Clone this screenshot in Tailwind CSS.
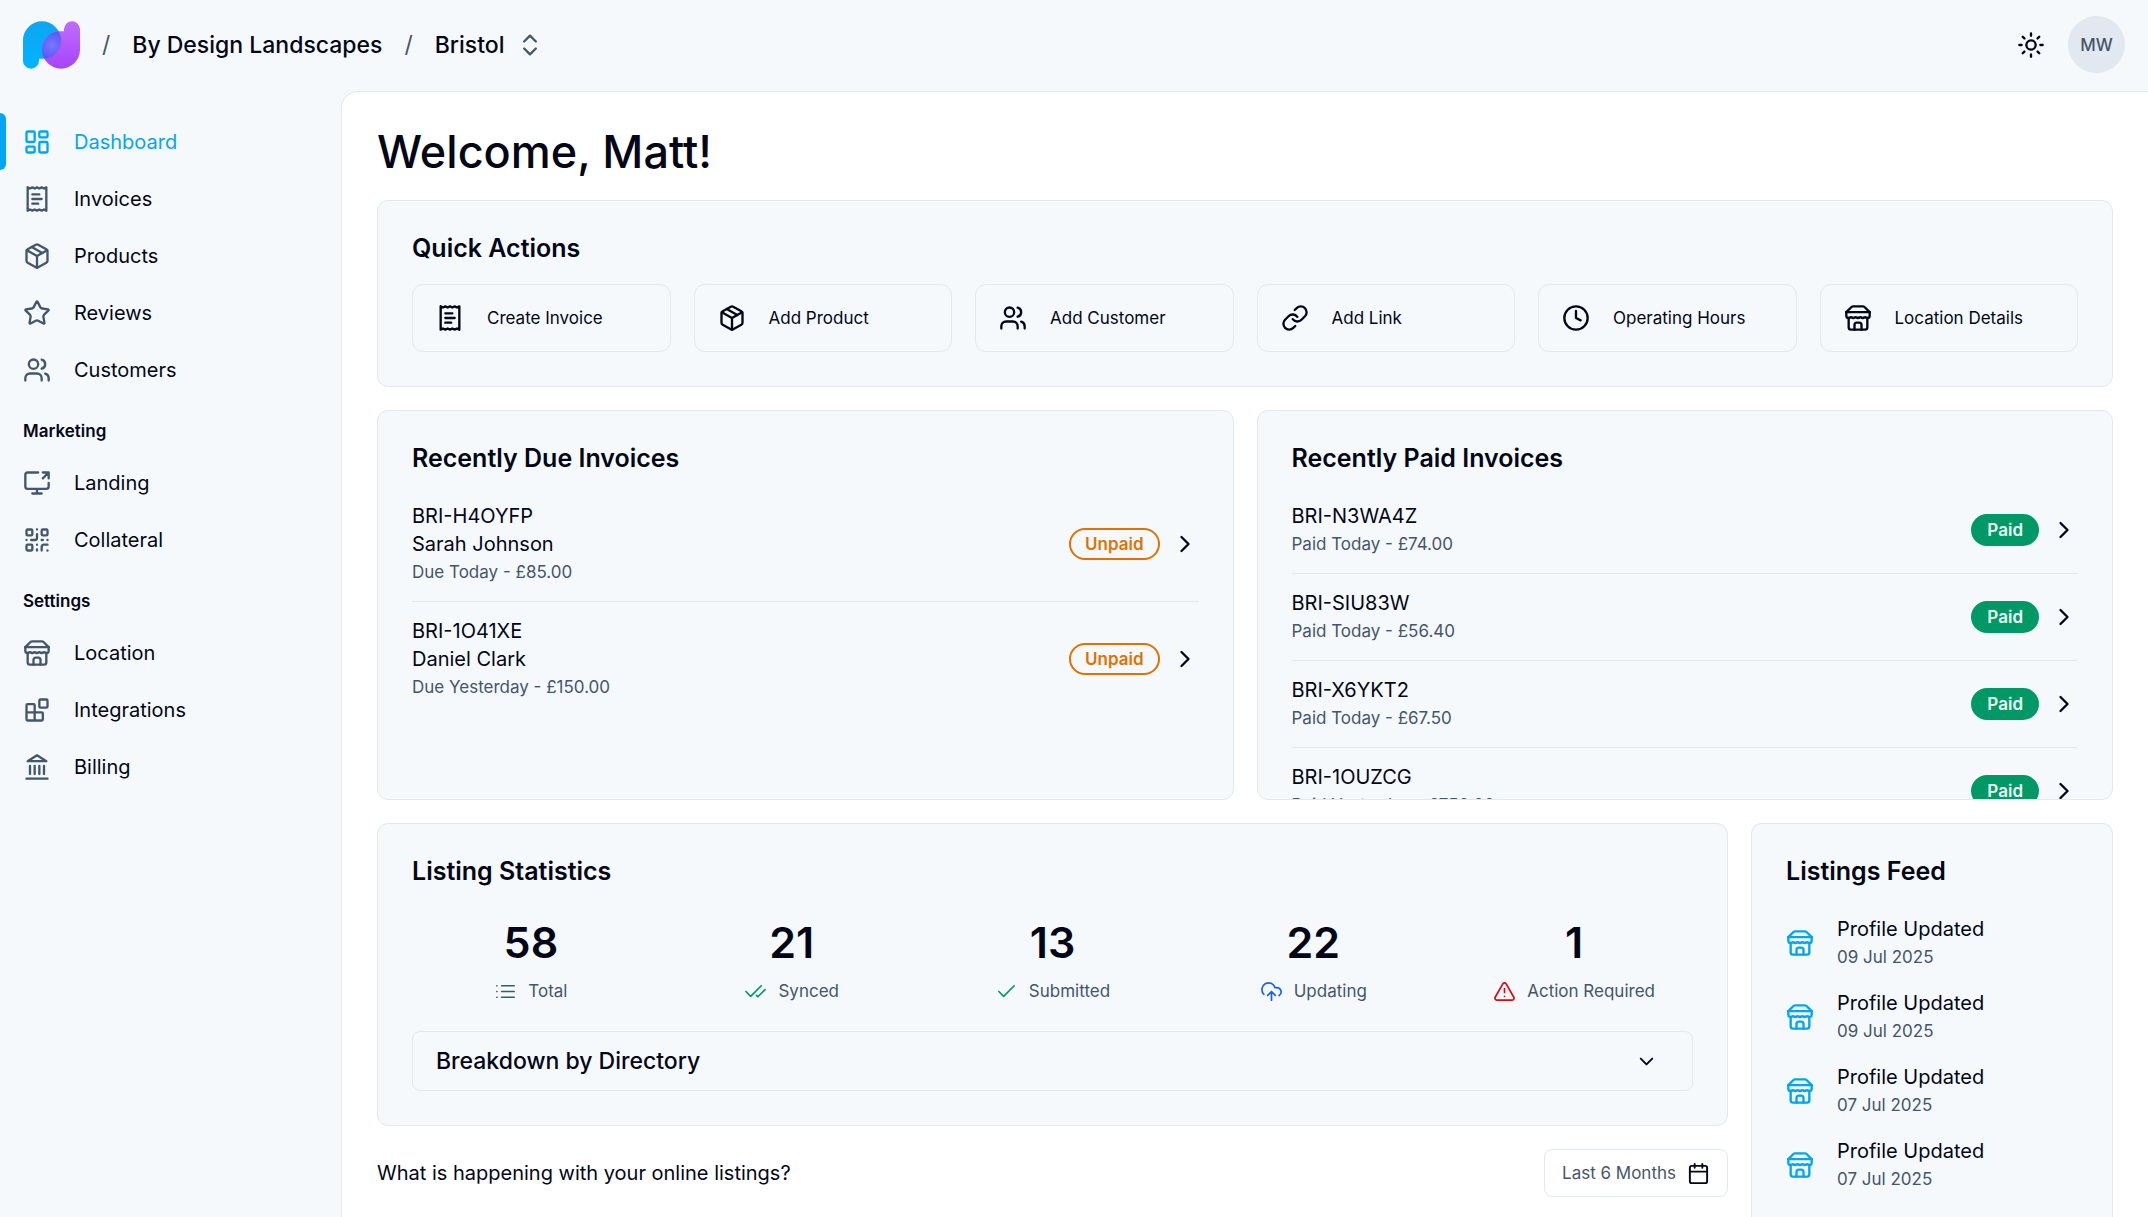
<!DOCTYPE html>
<html lang="en">
<head>
<meta charset="utf-8">
<meta name="viewport" content="width=device-width, initial-scale=1">
<title>Dashboard</title>
<script src="https://cdn.jsdelivr.net/npm/@tailwindcss/browser@4"></script>
</head>
<body class="flex h-screen flex-col overflow-hidden bg-[#f5f9fc] font-['Inter',sans-serif] text-[20px] leading-[28px] text-[#020617]">
<svg class="hidden" aria-hidden="true">
  <symbol id="dashboard" viewBox="0 0 24 24"><rect x="3" y="3" width="7" height="9" rx="1"/><rect x="14" y="3" width="7" height="5" rx="1"/><rect x="14" y="12" width="7" height="9" rx="1"/><rect x="3" y="16" width="7" height="5" rx="1"/></symbol>
  <symbol id="receipt" viewBox="0 0 24 24"><path d="M4 2v20l2-1 2 1 2-1 2 1 2-1 2 1 2-1 2 1V2l-2 1-2-1-2 1-2-1-2 1-2-1-2 1Z"/><path d="M14 8H8M16 12H8M13 16H8"/></symbol>
  <symbol id="package" viewBox="0 0 24 24"><path d="m7.5 4.27 9 5.15"/><path d="M21 8a2 2 0 0 0-1-1.73l-7-4a2 2 0 0 0-2 0l-7 4A2 2 0 0 0 3 8v8a2 2 0 0 0 1 1.73l7 4a2 2 0 0 0 2 0l7-4A2 2 0 0 0 21 16Z"/><path d="m3.3 7 8.7 5 8.7-5M12 22V12"/></symbol>
  <symbol id="star" viewBox="0 0 24 24"><path d="M11.525 2.295a.53.53 0 0 1 .95 0l2.31 4.679a2.123 2.123 0 0 0 1.595 1.16l5.166.756a.53.53 0 0 1 .294.904l-3.736 3.638a2.123 2.123 0 0 0-.611 1.878l.882 5.14a.53.53 0 0 1-.771.56l-4.618-2.428a2.122 2.122 0 0 0-1.973 0L6.396 21.01a.53.53 0 0 1-.77-.56l.881-5.139a2.122 2.122 0 0 0-.611-1.879L2.16 9.795a.53.53 0 0 1 .294-.906l5.165-.755a2.122 2.122 0 0 0 1.597-1.16z"/></symbol>
  <symbol id="users" viewBox="0 0 24 24"><path d="M16 21v-2a4 4 0 0 0-4-4H6a4 4 0 0 0-4 4v2"/><circle cx="9" cy="7" r="4"/><path d="M22 21v-2a4 4 0 0 0-3-3.87M16 3.13a4 4 0 0 1 0 7.75"/></symbol>
  <symbol id="screen" viewBox="0 0 24 24"><path d="M13 3H4a2 2 0 0 0-2 2v10a2 2 0 0 0 2 2h16a2 2 0 0 0 2-2v-3M8 21h8M12 17v4M17 8l5-5M17 3h5v5"/></symbol>
  <symbol id="qr" viewBox="0 0 24 24"><rect x="3" y="3" width="5" height="5" rx="1"/><rect x="16" y="3" width="5" height="5" rx="1"/><rect x="3" y="16" width="5" height="5" rx="1"/><path d="M21 16h-3a2 2 0 0 0-2 2v3M21 21v.01M12 7v3a2 2 0 0 1-2 2H7M3 12h.01M12 3h.01M12 16v.01M16 12h1M21 12v.01M12 21v-1"/></symbol>
  <symbol id="store" viewBox="0 0 24 24"><path d="m2 7 4.41-4.41A2 2 0 0 1 7.83 2h8.34a2 2 0 0 1 1.42.59L22 7"/><path d="M4 12v8a2 2 0 0 0 2 2h12a2 2 0 0 0 2-2v-8"/><path d="M15 22v-4a2 2 0 0 0-2-2h-2a2 2 0 0 0-2 2v4"/><path d="M2 7h20"/><path d="M22 7v3a2 2 0 0 1-2 2a2.7 2.7 0 0 1-1.59-.63.7.7 0 0 0-.82 0A2.7 2.7 0 0 1 16 12a2.7 2.7 0 0 1-1.59-.63.7.7 0 0 0-.82 0A2.7 2.7 0 0 1 12 12a2.7 2.7 0 0 1-1.59-.63.7.7 0 0 0-.82 0A2.7 2.7 0 0 1 8 12a2.7 2.7 0 0 1-1.59-.63.7.7 0 0 0-.82 0A2.7 2.7 0 0 1 4 12a2 2 0 0 1-2-2V7"/></symbol>
  <symbol id="blocks" viewBox="0 0 24 24"><rect x="14" y="3" width="7" height="7" rx="1"/><path d="M10 21V8a1 1 0 0 0-1-1H4a1 1 0 0 0-1 1v12a1 1 0 0 0 1 1h12a1 1 0 0 0 1-1v-5a1 1 0 0 0-1-1H3"/></symbol>
  <symbol id="landmark" viewBox="0 0 24 24"><path d="M3 22h18M6 18v-7M10 18v-7M14 18v-7M18 18v-7M12 2l8 5H4Z"/></symbol>
  <symbol id="link" viewBox="0 0 24 24"><path d="M10 13a5 5 0 0 0 7.54.54l3-3a5 5 0 0 0-7.07-7.07l-1.72 1.71"/><path d="M14 11a5 5 0 0 0-7.54-.54l-3 3a5 5 0 0 0 7.07 7.07l1.71-1.71"/></symbol>
  <symbol id="clock" viewBox="0 0 24 24"><circle cx="12" cy="12" r="10"/><path d="M12 6v6l4 2"/></symbol>
  <symbol id="sun" viewBox="0 0 24 24"><circle cx="12" cy="12" r="4"/><path d="M12 2v2M12 20v2M4.93 4.93l1.41 1.41M17.66 17.66l1.41 1.41M2 12h2M20 12h2M6.34 17.66l-1.41 1.41M19.07 4.93l-1.41 1.41"/></symbol>
  <symbol id="updown" viewBox="0 0 24 24"><path d="m7 15 5 5 5-5M7 9l5-5 5 5"/></symbol>
  <symbol id="right" viewBox="0 0 24 24"><path d="m9 18 6-6-6-6"/></symbol>
  <symbol id="down" viewBox="0 0 24 24"><path d="m6 9 6 6 6-6"/></symbol>
  <symbol id="list" viewBox="0 0 24 24"><path d="M8 6h13M8 12h13M8 18h13M3 6h.01M3 12h.01M3 18h.01"/></symbol>
  <symbol id="checks" viewBox="0 0 24 24"><path d="M18 6 7 17l-5-5M22 10l-7.5 7.5L13 16"/></symbol>
  <symbol id="check" viewBox="0 0 24 24"><path d="M20 6 9 17l-5-5"/></symbol>
  <symbol id="cloud" viewBox="0 0 24 24"><path d="M4 14.899A7 7 0 1 1 15.71 8h1.79a4.5 4.5 0 0 1 2.5 8.242M12 12v9M16 16l-4-4-4 4"/></symbol>
  <symbol id="alert" viewBox="0 0 24 24"><path d="m21.73 18-8-14a2 2 0 0 0-3.48 0l-8 14A2 2 0 0 0 4 21h16a2 2 0 0 0 1.73-3M12 9v4M12 17h.01"/></symbol>
  <symbol id="calendar" viewBox="0 0 24 24"><path d="M8 2v4M16 2v4"/><rect x="3" y="4" width="18" height="18" rx="2"/><path d="M3 10h18"/></symbol>
</svg>

<header class="flex h-[91px] shrink-0 items-center justify-between px-[23px] pb-[2px]">
  <nav aria-label="Breadcrumb" class="flex items-center gap-[22px] text-[23px] font-medium">
    <a href="#" aria-label="Home">
      <svg class="h-[48px] w-[57px]" viewBox="0 0 57 47.3">
        <defs>
          <linearGradient id="blue" x1="0" y1="0" x2="0" y2="1"><stop stop-color="#0ea5f0"/><stop offset="1" stop-color="#00b4ff"/></linearGradient>
          <linearGradient id="violet" x1="0" y1="0" x2="0" y2="1"><stop stop-color="#a644fb"/><stop offset="1" stop-color="#bf6dfb"/></linearGradient>
          <radialGradient id="lens" gradientUnits="userSpaceOnUse" cx="29" cy="24" r="14"><stop stop-color="#7878ff"/><stop offset="1" stop-color="#5957f5"/></radialGradient>
          <path id="lobe" d="M0 19A19 19 0 0 1 38 19A18.5 18.5 0 0 1 19.5 37.5H16V39.3A8 8 0 0 1 0 39.3Z"/>
          <clipPath id="overlap"><use href="#lobe"/></clipPath>
        </defs>
        <use href="#lobe" fill="url(#blue)"/>
        <use href="#lobe" fill="url(#violet)" transform="rotate(180 28.5 23.65)"/>
        <g clip-path="url(#overlap)"><path d="M57 28.3A19 19 0 0 1 19 28.3A18.5 18.5 0 0 1 37.5 9.8H41V47H19Z" fill="url(#lens)"/></g>
      </svg>
    </a>
    <span class="font-normal text-slate-600">/</span>
    <a href="#">By Design Landscapes</a>
    <span class="font-normal text-slate-600">/</span>
    <button type="button" class="flex items-center gap-[11px]">Bristol
      <svg class="size-[28px] fill-none stroke-slate-600 stroke-2 [stroke-linecap:round] [stroke-linejoin:round]"><use href="#updown"/></svg>
    </button>
  </nav>
  <div class="flex items-center gap-[23px] [&_svg]:size-[28px] [&_svg]:fill-none [&_svg]:stroke-current [&_svg]:stroke-2 [&_svg]:[stroke-linecap:round]">
    <button type="button" aria-label="Toggle theme"><svg><use href="#sun"/></svg></button>
    <button type="button" class="size-[57px] rounded-full bg-slate-200 text-[17px] font-medium text-slate-600">MW</button>
  </div>
</header>

<div class="flex min-h-0 flex-1">
  <nav aria-label="Main" class="w-[341px] shrink-0 pt-[22px] [&_a]:flex [&_a]:h-[57px] [&_a]:items-center [&_a]:gap-[23px] [&_a]:px-[23px] [&_h2]:h-[56px] [&_h2]:px-[23px] [&_h2]:pt-[19px] [&_h2]:text-[17px] [&_h2]:font-semibold [&_svg]:size-[28px] [&_svg]:fill-none [&_svg]:stroke-slate-600 [&_svg]:stroke-2 [&_svg]:[stroke-linecap:round] [&_svg]:[stroke-linejoin:round]">
    <a href="#" aria-current="page" class="relative text-sky-500 before:absolute before:inset-y-0 before:left-0 before:w-[6px] before:rounded-r-md before:bg-[#00a6f4]"><svg class="stroke-sky-500!"><use href="#dashboard"/></svg>Dashboard</a>
    <a href="#"><svg><use href="#receipt"/></svg>Invoices</a>
    <a href="#"><svg><use href="#package"/></svg>Products</a>
    <a href="#"><svg><use href="#star"/></svg>Reviews</a>
    <a href="#"><svg><use href="#users"/></svg>Customers</a>
    <h2>Marketing</h2>
    <a href="#"><svg><use href="#screen"/></svg>Landing</a>
    <a href="#"><svg><use href="#qr"/></svg>Collateral</a>
    <h2>Settings</h2>
    <a href="#"><svg><use href="#store"/></svg>Location</a>
    <a href="#"><svg><use href="#blocks"/></svg>Integrations</a>
    <a href="#"><svg><use href="#landmark"/></svg>Billing</a>
  </nav>

  <main class="flex min-w-0 flex-1 flex-col gap-[23px] overflow-hidden rounded-tl-[17px] border-t border-l border-slate-200 bg-white px-[35px] pt-[34px] [&_h2]:text-[25px] [&_h2]:leading-[26px] [&_h2]:font-semibold [&_svg]:shrink-0 [&_svg]:fill-none [&_svg]:stroke-current [&_svg]:stroke-2 [&_svg]:[stroke-linecap:round] [&_svg]:[stroke-linejoin:round]">
    <h1 class="text-[45px] leading-[51px] font-medium">Welcome, Matt!</h1>

    <section class="shrink-0 rounded-[11px] border border-slate-200 bg-[#f5f9fc] p-[34px]">
      <h2>Quick Actions</h2>
      <div class="mt-[23px] grid grid-cols-6 gap-[23px] text-[17px] [&_a]:flex [&_a]:h-[68px] [&_a]:items-center [&_a]:gap-[23px] [&_a]:rounded-[11px] [&_a]:border [&_a]:border-slate-200 [&_a]:px-[23px] [&_svg]:size-[28px]">
        <a href="#"><svg><use href="#receipt"/></svg>Create Invoice</a>
        <a href="#"><svg><use href="#package"/></svg>Add Product</a>
        <a href="#"><svg><use href="#users"/></svg>Add Customer</a>
        <a href="#"><svg><use href="#link"/></svg>Add Link</a>
        <a href="#"><svg><use href="#clock"/></svg>Operating Hours</a>
        <a href="#"><svg><use href="#store"/></svg>Location Details</a>
      </div>
    </section>

    <div class="grid h-[390px] shrink-0 grid-cols-2 gap-[23px] [&_a]:flex [&_a]:items-center [&_a]:gap-[11px] [&_a]:py-[15px] [&_a_svg]:size-[28px] [&_div]:flex-1 [&_small]:block [&_small]:text-[17px] [&_small]:leading-[28px] [&_small]:text-slate-600 [&_ul]:mt-[16px] [&_ul]:divide-y [&_ul]:divide-slate-200">
      <section class="overflow-hidden rounded-[11px] border border-slate-200 bg-[#f5f9fc] px-[34px] pt-[34px]">
        <h2>Recently Due Invoices</h2>
        <ul>
          <li><a href="#"><div><p>BRI-H4OYFP</p><p>Sarah Johnson</p><small>Due Today - £85.00</small></div><span class="rounded-full border-2 border-amber-600 px-[14px] text-[17px] font-semibold text-amber-600">Unpaid</span><svg><use href="#right"/></svg></a></li>
          <li><a href="#"><div><p>BRI-1O41XE</p><p>Daniel Clark</p><small>Due Yesterday - £150.00</small></div><span class="rounded-full border-2 border-amber-600 px-[14px] text-[17px] font-semibold text-amber-600">Unpaid</span><svg><use href="#right"/></svg></a></li>
        </ul>
      </section>
      <section class="overflow-hidden rounded-[11px] border border-slate-200 bg-[#f5f9fc] px-[34px] pt-[34px]">
        <h2>Recently Paid Invoices</h2>
        <ul>
          <li><a href="#"><div><p>BRI-N3WA4Z</p><small>Paid Today - £74.00</small></div><span class="rounded-full border-2 border-emerald-600 bg-emerald-600 px-[14px] text-[17px] font-semibold text-emerald-50">Paid</span><svg><use href="#right"/></svg></a></li>
          <li><a href="#"><div><p>BRI-SIU83W</p><small>Paid Today - £56.40</small></div><span class="rounded-full border-2 border-emerald-600 bg-emerald-600 px-[14px] text-[17px] font-semibold text-emerald-50">Paid</span><svg><use href="#right"/></svg></a></li>
          <li><a href="#"><div><p>BRI-X6YKT2</p><small>Paid Today - £67.50</small></div><span class="rounded-full border-2 border-emerald-600 bg-emerald-600 px-[14px] text-[17px] font-semibold text-emerald-50">Paid</span><svg><use href="#right"/></svg></a></li>
          <li><a href="#"><div><p>BRI-1OUZCG</p><small>Paid Yesterday - £750.00</small></div><span class="rounded-full border-2 border-emerald-600 bg-emerald-600 px-[14px] text-[17px] font-semibold text-emerald-50">Paid</span><svg><use href="#right"/></svg></a></li>
        </ul>
      </section>
    </div>

    <div class="flex min-h-0 flex-1 gap-[23px]">
      <div class="flex min-w-0 flex-1 flex-col gap-[23px]">
        <section class="rounded-[11px] border border-slate-200 bg-[#f5f9fc] p-[34px]">
          <h2>Listing Statistics</h2>
          <dl class="mt-[33px] grid grid-cols-5 gap-[23px] text-center [&_dd]:text-[43px] [&_dd]:leading-[50px] [&_dd]:font-semibold [&_div]:flex [&_div]:flex-col-reverse [&_div]:gap-[10px] [&_dt]:flex [&_dt]:items-center [&_dt]:justify-center [&_dt]:gap-[11px] [&_dt]:text-[17px] [&_dt]:text-slate-600 [&_svg]:size-[23px] [&_svg]:stroke-[1.75]">
            <div><dt><svg><use href="#list"/></svg>Total</dt><dd>58</dd></div>
            <div><dt><svg class="text-emerald-600"><use href="#checks"/></svg>Synced</dt><dd>21</dd></div>
            <div><dt><svg class="text-emerald-600"><use href="#check"/></svg>Submitted</dt><dd>13</dd></div>
            <div><dt><svg class="text-blue-600"><use href="#cloud"/></svg>Updating</dt><dd>22</dd></div>
            <div><dt><svg class="text-red-600"><use href="#alert"/></svg>Action Required</dt><dd>1</dd></div>
          </dl>
          <button type="button" aria-expanded="false" class="mt-[26px] flex h-[60px] w-full items-center justify-between rounded-[8px] border border-slate-200 pr-[34px] pl-[23px] text-[23px] font-medium">Breakdown by Directory
            <svg class="size-[23px]"><use href="#down"/></svg>
          </button>
        </section>
        <div class="flex items-center justify-between">
          <p>What is happening with your online listings?</p>
          <button type="button" class="flex h-[48px] items-center gap-[11px] rounded-[8px] border border-slate-200 px-[17px] text-[17px] text-slate-600">Last 6 Months
            <svg class="size-[23px] text-[#020617]"><use href="#calendar"/></svg>
          </button>
        </div>
      </div>
      <section class="w-[362px] shrink-0 rounded-t-[11px] border border-b-0 border-slate-200 bg-[#f5f9fc] px-[34px] pt-[34px]">
        <h2>Listings Feed</h2>
        <ul class="mt-[31px] flex flex-col gap-[18px] [&_li]:flex [&_li]:items-center [&_li]:gap-[23px] [&_svg]:size-[28px] [&_svg]:text-sky-500 [&_time]:block [&_time]:text-[17px] [&_time]:text-slate-600">
          <li><svg><use href="#store"/></svg><div><p>Profile Updated</p><time datetime="2025-07-09">09 Jul 2025</time></div></li>
          <li><svg><use href="#store"/></svg><div><p>Profile Updated</p><time datetime="2025-07-09">09 Jul 2025</time></div></li>
          <li><svg><use href="#store"/></svg><div><p>Profile Updated</p><time datetime="2025-07-07">07 Jul 2025</time></div></li>
          <li><svg><use href="#store"/></svg><div><p>Profile Updated</p><time datetime="2025-07-07">07 Jul 2025</time></div></li>
        </ul>
      </section>
    </div>
  </main>
</div>
</body>
</html>
